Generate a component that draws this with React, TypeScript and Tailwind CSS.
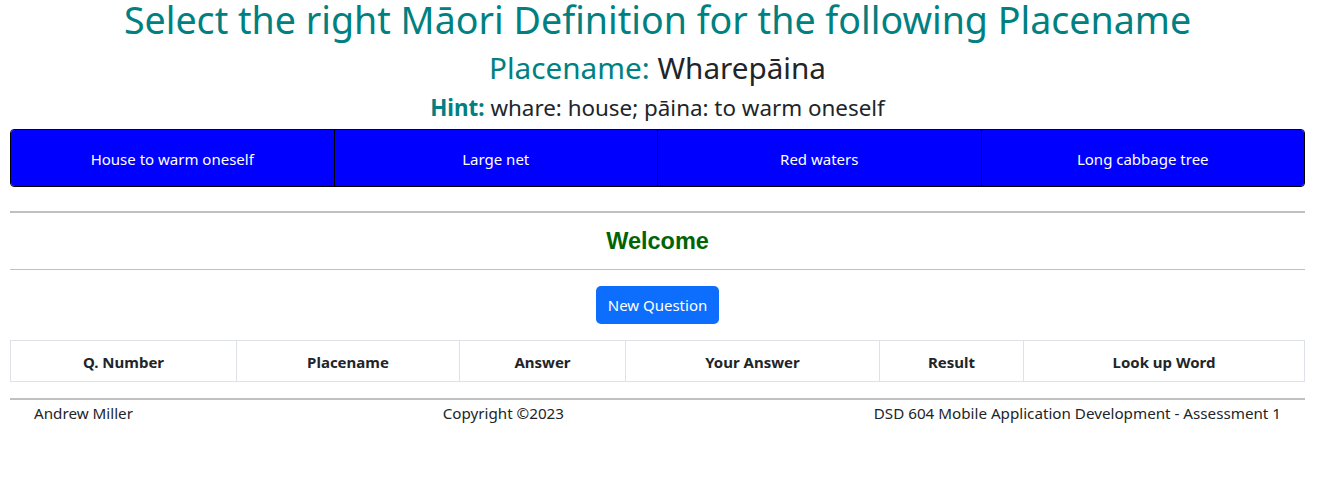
import React from 'react';

const options = ['House to warm oneself', 'Large net', 'Red waters', 'Long cabbage tree'];
const columns = [
  { label: 'Q. Number', w: 'w-[226px]' },
  { label: 'Placename', w: 'w-[223px]' },
  { label: 'Answer', w: 'w-[166px]' },
  { label: 'Your Answer', w: 'w-[254px]' },
  { label: 'Result', w: 'w-[144px]' },
  { label: 'Look up Word', w: '' },
];

export default function App() {
  return (
    <div className="min-h-screen bg-white text-[#212529] font-['Noto_Sans',sans-serif]">
      <div className="pl-[10px] pr-[20px]">
        {/* heading */}
        <h1 className="text-center text-[37.6px] leading-[40px] text-[#008080]">
          Select the right Māori Definition for the following Placename
        </h1>
        <h2 className="text-center text-[29.7px] leading-[36px] mt-[10px]">
          <span className="text-[#008080]">Placename: </span>
          <span>Wharepāina</span>
        </h2>
        <h4 className="text-center text-[22.4px] leading-[30px] mt-[7px]">
          <b className="text-[#008080]">Hint:</b> whare: house; pāina: to warm oneself
        </h4>

        {/* answer buttons */}
        <div className="mt-[6px] flex h-[58px] rounded border border-black overflow-hidden">
          {options.map((opt, i) => (
            <button
              key={opt}
              className={`flex-1 bg-[#0000ff] text-white text-[15px] pt-[2px] ${i > 0 ? 'border-l border-black' : ''}`}
            >
              {opt}
            </button>
          ))}
        </div>

        <hr className="mt-[24px] border-t-2 border-[#c0c0c0]" />
        <div className="h-[56px] flex items-center justify-center pt-[2px]">
          <h3 className="text-[23.5px] font-bold text-[#006400] font-['Liberation_Sans',sans-serif]">Welcome</h3>
        </div>
        <hr className="border-t border-[#c0c0c0]" />

        <div className="flex justify-center mt-[16px]">
          <button className="bg-[#0d6efd] text-white text-[15px] rounded-[5px] px-[12px] h-[38px] pt-[1px]">
            New Question
          </button>
        </div>

        <table className="mt-[16px] w-full border-collapse">
          <thead>
            <tr>
              {columns.map((c) => (
                <th key={c.label} className={`${c.w} border border-[#dee2e6] h-[41px] pt-[2px] text-[15px] font-bold`}>
                  {c.label}
                </th>
              ))}
            </tr>
          </thead>
        </table>

        <hr className="mt-[16px] border-t-2 border-[#c0c0c0]" />
        <footer className="flex justify-between px-6 pt-[2px] text-[15.2px]">
          <span>Andrew Miller</span>
          <span>Copyright ©2023</span>
          <span>DSD 604 Mobile Application Development - Assessment 1</span>
        </footer>
      </div>
    </div>
  );
}
